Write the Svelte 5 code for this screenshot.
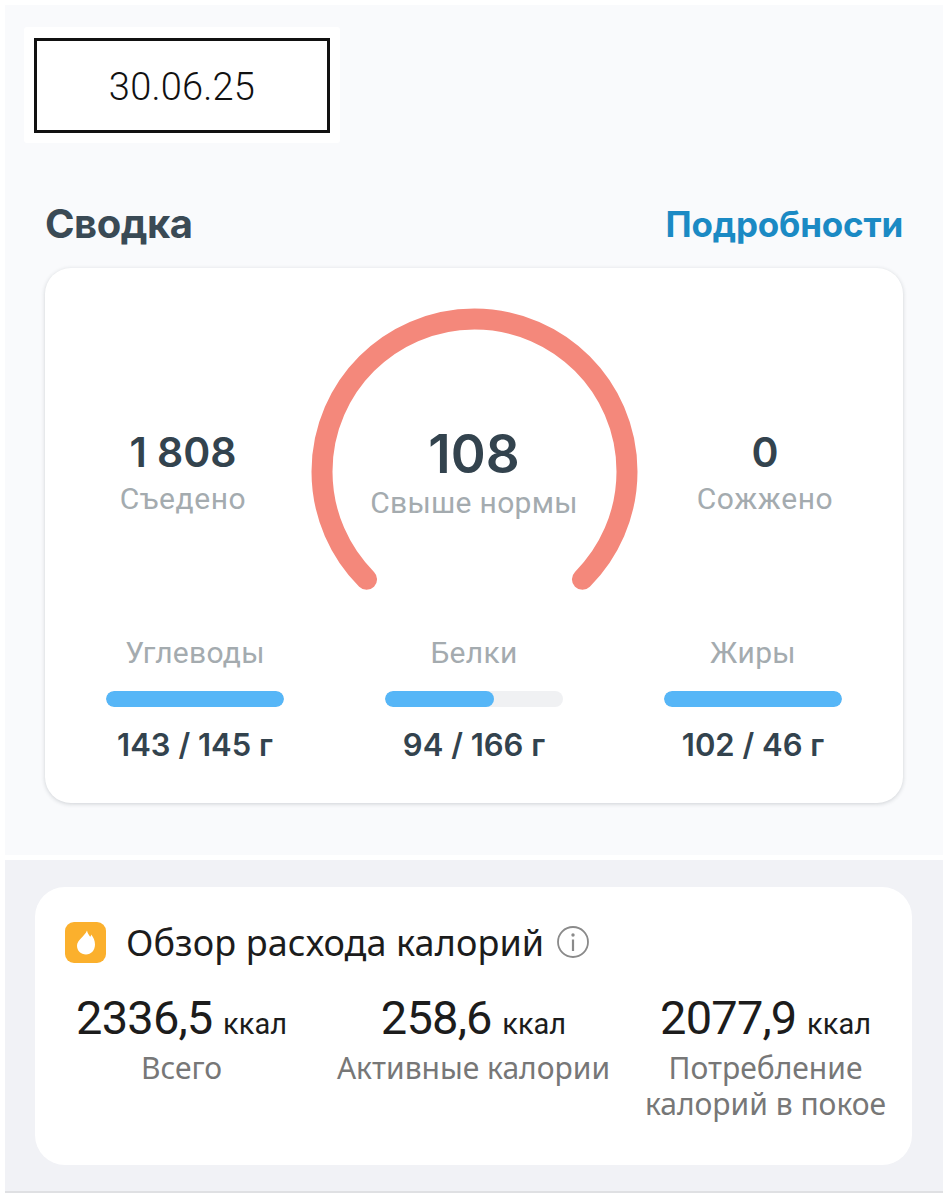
<script>
  const macros = [
    { name: 'Углеводы', value: '143 / 145 г', pct: 100 },
    { name: 'Белки', value: '94 / 166 г', pct: 61 },
    { name: 'Жиры', value: '102 / 46 г', pct: 100 }
  ];
  const burn = [
    { num: '2336', dec: ',5', label: 'Всего' },
    { num: '258', dec: ',6', label: 'Активные калории' },
    { num: '2077', dec: ',9', label: 'Потребление\nкалорий в покое' }
  ];
</script>

<main class="page">
  <section class="summary">
    <div class="date-wrap">
      <div class="date">30.06.25</div>
    </div>

    <div class="head">
      <h2>Сводка</h2>
      <span class="more">Подробности</span>
    </div>

    <div class="card">
      <div class="top">
        <div class="stat">
          <b>1 808</b>
          <span>Съедено</span>
        </div>
        <div class="gauge">
          <svg width="330" height="290" viewBox="0 0 330 290">
            <path d="M 57.6 271.3 A 152.5 152.5 0 1 1 273.4 271.3" fill="none" stroke="#f4887b" stroke-width="21" stroke-linecap="round" />
          </svg>
          <div class="gauge-text">
            <b>108</b>
            <span>Свыше нормы</span>
          </div>
        </div>
        <div class="stat">
          <b>0</b>
          <span>Сожжено</span>
        </div>
      </div>

      <div class="macros">
        {#each macros as m}
          <div class="macro">
            <span class="macro-name">{m.name}</span>
            <div class="track"><div class="fill" style="width: {m.pct}%"></div></div>
            <b>{m.value}</b>
          </div>
        {/each}
      </div>
    </div>
  </section>

  <section class="burn">
    <div class="burn-card">
      <div class="burn-head">
        <span class="flame">
          <svg width="18" height="25" viewBox="0 0 18 25">
            <path d="M10 0.5 C10.5 3.5 12 5 13.2 6.8 C13.9 6 14.2 5.2 14.2 4.4 C16.4 7.2 18 10.4 18 14.6 C18 20.5 14.2 24.5 9 24.5 C3.8 24.5 0 20.8 0 15.8 C0 9.8 7.6 6.6 10 0.5 Z" fill="#fff" />
          </svg>
        </span>
        <h3>Обзор расхода калорий</h3>
        <svg class="info" width="34" height="34" viewBox="0 0 34 34">
          <circle cx="17" cy="17" r="15" fill="none" stroke="#8a8a8a" stroke-width="1.8" />
          <circle cx="17" cy="10" r="1.7" fill="#8a8a8a" />
          <rect x="15.9" y="14.5" width="2.2" height="11.5" fill="#8a8a8a" />
        </svg>
      </div>
      <div class="burn-cols">
        {#each burn as b}
          <div class="burn-col">
            <div class="amount">{b.num}<span class="dec">{b.dec}</span> <small>ккал</small></div>
            <div class="burn-label">{b.label}</div>
          </div>
        {/each}
      </div>
    </div>
  </section>
</main>

<style>
  :global(body) {
    background: #fff;
  }
  .page {
    width: 948px;
    height: 1200px;
    box-sizing: border-box;
    padding: 5px;
    font-family: Roboto, "Noto Sans", sans-serif;
  }
  .summary {
    background: #f9fafc;
    height: 850px;
    box-sizing: border-box;
    padding: 22px 40px 0 40px;
  }
  .date-wrap {
    background: #fff;
    width: 316px;
    height: 116px;
    margin-left: -21px;
    padding: 11px 10px;
    box-sizing: border-box;
    border-radius: 3px;
  }
  .date {
    border: 3px solid #111;
    height: 95px;
    width: 296px;
    box-sizing: border-box;
    display: flex;
    align-items: center;
    justify-content: center;
    padding-top: 3px;
    font-size: 38px;
    font-weight: 300;
    letter-spacing: 0.2px;
    color: #111;
  }
  .head {
    display: flex;
    justify-content: space-between;
    align-items: center;
    margin: 56px 0 21px 0;
    height: 48px;
  }
  .head h2 {
    margin: 0;
    font-size: 40px;
    font-weight: 700;
    color: #3a4a55;
    font-family: Inter, Roboto, sans-serif;
    letter-spacing: -0.5px;
  }
  .more {
    font-size: 35px;
    font-weight: 700;
    color: #1b8ac4;
    font-family: Inter, Roboto, sans-serif;
    letter-spacing: -0.2px;
    padding-top: 2px;
  }
  .card {
    background: #fff;
    border-radius: 26px;
    height: 535px;
    box-sizing: border-box;
    box-shadow: 0 1px 4px rgba(40, 50, 60, 0.2);
    padding-top: 40px;
  }
  .top {
    display: grid;
    grid-template-columns: 1fr 330px 1fr;
    height: 290px;
  }
  .stat {
    display: flex;
    flex-direction: column;
    align-items: center;
    padding-top: 121px;
  }
  .stat:first-child {
    padding-left: 12px;
  }
  .stat:last-child {
    padding-right: 12px;
  }
  .stat b {
    font-family: Inter, Roboto, sans-serif;
    font-size: 41px;
    font-weight: 600;
    color: #33434e;
    line-height: 46px;
  }
  .stat span {
    font-size: 30px;
    color: #a4abaf;
    line-height: 47px;
    letter-spacing: 0.6px;
  }
  .gauge {
    position: relative;
  }
  .gauge svg {
    display: block;
  }
  .gauge-text {
    position: absolute;
    left: 0;
    right: 0;
    top: 117px;
    display: flex;
    flex-direction: column;
    align-items: center;
  }
  .gauge-text b {
    font-family: Inter, Roboto, sans-serif;
    font-size: 53px;
    font-weight: 600;
    line-height: 58px;
    color: #33434e;
  }
  .gauge-text span {
    font-size: 30px;
    color: #a4abaf;
    line-height: 40px;
    letter-spacing: 0.3px;
  }
  .macros {
    display: grid;
    grid-template-columns: repeat(3, 178px);
    justify-content: space-between;
    padding: 0 61px;
    margin-top: 32px;
  }
  .macro {
    display: flex;
    flex-direction: column;
    align-items: center;
  }
  .macro-name {
    font-size: 30px;
    color: #a4abaf;
    line-height: 46px;
    letter-spacing: 0.3px;
  }
  .track {
    width: 178px;
    height: 16px;
    background: #f0f1f3;
    border-radius: 8px;
    overflow: hidden;
    margin: 15px 0 16px;
  }
  .fill {
    height: 100%;
    background: #56b6f7;
    border-radius: 8px;
  }
  .macro b {
    font-family: Inter, Roboto, sans-serif;
    font-size: 31px;
    font-weight: 600;
    color: #33434e;
    line-height: 44px;
    white-space: nowrap;
  }
  .burn {
    background: #f1f2f6;
    height: 333px;
    margin-top: 5px;
    box-sizing: border-box;
    padding: 27px 31px 0 30px;
    border-bottom: 2px solid #dfe0e3;
  }
  .burn-card {
    background: #fff;
    border-radius: 30px;
    height: 278px;
    box-sizing: border-box;
    padding: 34px 30px 0 30px;
  }
  .burn-head {
    display: flex;
    align-items: center;
    height: 42px;
  }
  .flame {
    width: 41px;
    height: 41px;
    background: #fbb02d;
    border-radius: 9px;
    display: flex;
    align-items: center;
    justify-content: center;
  }
  .flame svg {
    display: block;
  }
  .burn-head h3 {
    margin: 0 12px 0 20px;
    font-size: 36px;
    font-weight: 400;
    color: #1c1c1c;
    font-family: "Noto Sans", Roboto, sans-serif;
    letter-spacing: 0.1px;
  }
  .burn-cols {
    display: grid;
    grid-template-columns: 273px 1fr 273px;
    margin: 29px -20px 0 -20px;
  }
  .burn-col {
    text-align: center;
  }
  .amount {
    font-size: 47px;
    font-weight: 400;
    color: #1c1c1c;
    line-height: 52px;
    letter-spacing: -0.8px;
    white-space: nowrap;
  }
  .dec {
    letter-spacing: -1px;
  }
  .amount small {
    font-size: 29px;
    letter-spacing: 0;
  }
  .burn-label {
    font-family: "Noto Sans", Roboto, sans-serif;
    font-size: 30px;
    color: #777;
    line-height: 36px;
    white-space: pre;
  }
</style>
